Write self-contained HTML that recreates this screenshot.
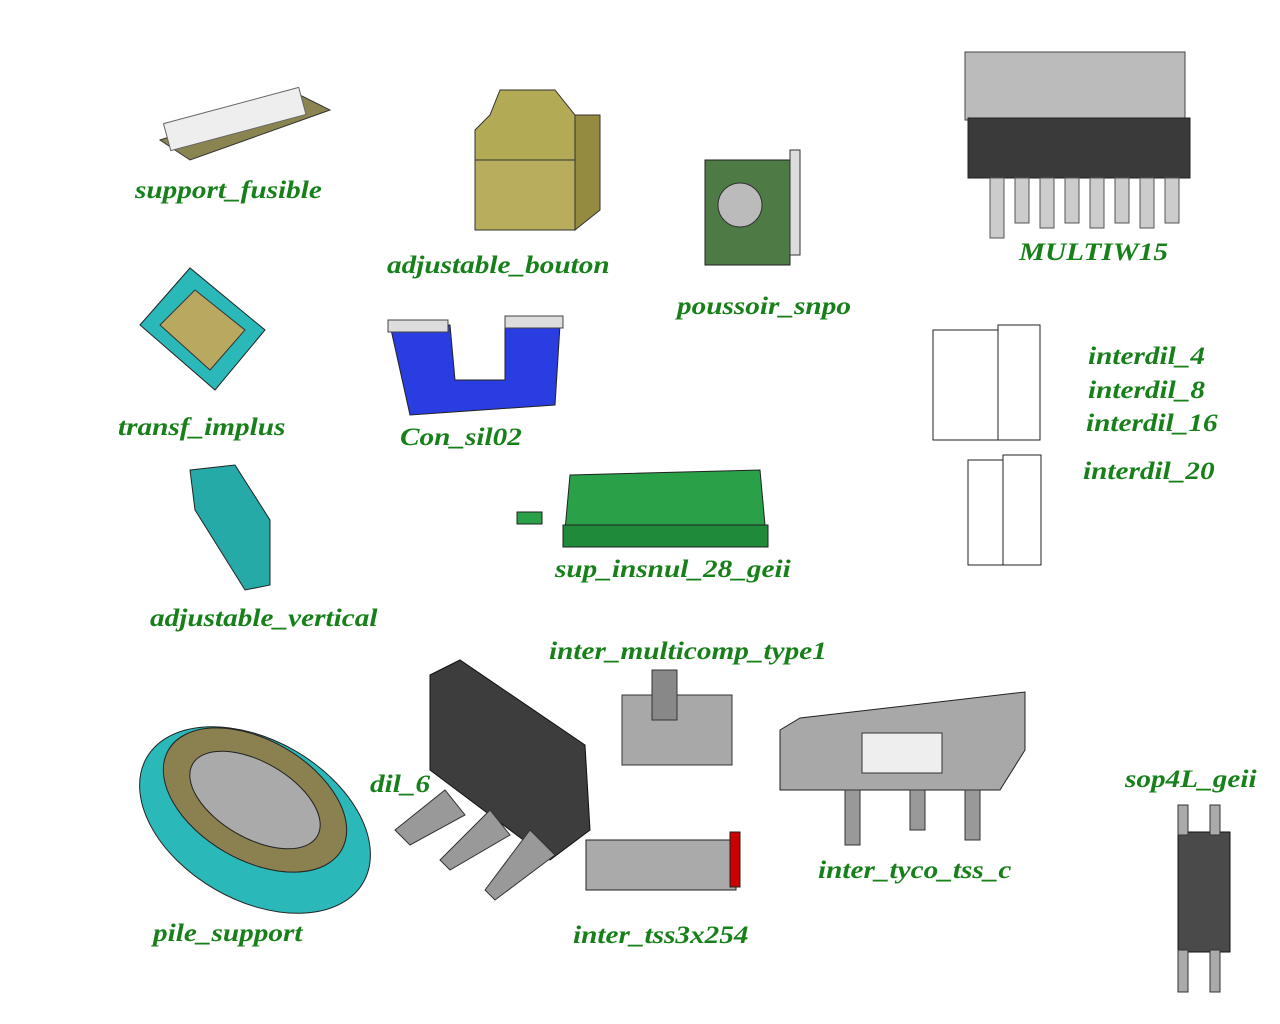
<!DOCTYPE html>
<html><head><meta charset="utf-8"><style>
body{margin:0;background:#fff;width:1280px;height:1024px;overflow:hidden;position:relative}
.l{position:absolute;font-family:"Liberation Serif",serif;font-weight:bold;font-style:italic;font-size:25px;color:#17801a;white-space:nowrap;line-height:1;transform:scaleX(1.17);transform-origin:0 0}
svg{position:absolute;left:0;top:0}
</style></head><body>
<svg width="1280" height="1024" viewBox="0 0 1280 1024">
<polygon points="160,140 300,95 330,110 190,160" fill="#8a8550" stroke="#333"/>
<rect x="165" y="105" width="140" height="28" fill="#eee" stroke="#666" transform="rotate(-15 235 120)"/>
<polygon points="475,160 575,160 595,115 575,115 555,90 500,90 490,115 475,130" fill="#b2aa55" stroke="#333"/>
<rect x="475" y="160" width="100" height="70" fill="#b8ad5c" stroke="#333"/>
<polygon points="575,115 600,115 600,210 575,230" fill="#948a40" stroke="#333"/>
<rect x="705" y="160" width="85" height="105" fill="#4d7a45" stroke="#222"/>
<rect x="790" y="150" width="10" height="105" fill="#ddd" stroke="#333"/>
<circle cx="740" cy="205" r="22" fill="#bbb" stroke="#333"/>
<polygon points="965,52 1185,52 1185,120 965,120" fill="#bbb" stroke="#444"/>
<rect x="968" y="118" width="222" height="60" fill="#3a3a3a" stroke="#222"/>
<g fill="#ccc" stroke="#555"><rect x="990" y="178" width="14" height="60"/><rect x="1015" y="178" width="14" height="45"/><rect x="1040" y="178" width="14" height="50"/><rect x="1065" y="178" width="14" height="45"/><rect x="1090" y="178" width="14" height="50"/><rect x="1115" y="178" width="14" height="45"/><rect x="1140" y="178" width="14" height="50"/><rect x="1165" y="178" width="14" height="45"/></g>
<polygon points="140,325 190,268 265,330 215,390" fill="#2ab8b8" stroke="#222"/>
<polygon points="160,325 195,290 245,330 210,370" fill="#b8a860" stroke="#333"/>
<polygon points="390,325 450,325 455,380 505,380 505,325 560,325 555,405 410,415" fill="#2a3de0" stroke="#222"/>
<rect x="388" y="320" width="60" height="12" fill="#ddd" stroke="#444"/><rect x="505" y="316" width="58" height="12" fill="#ddd" stroke="#444"/>
<rect x="933" y="330" width="65" height="110" fill="#fff" stroke="#222"/>
<rect x="998" y="325" width="42" height="115" fill="#fff" stroke="#222"/>
<rect x="968" y="460" width="35" height="105" fill="#fff" stroke="#222"/>
<rect x="1003" y="455" width="38" height="110" fill="#fff" stroke="#222"/>
<polygon points="570,475 760,470 765,525 565,530" fill="#2aa048" stroke="#222"/>
<rect x="563" y="525" width="205" height="22" fill="#1f8a3a" stroke="#222"/>
<rect x="517" y="512" width="25" height="12" fill="#2aa048" stroke="#222"/>
<polygon points="190,470 235,465 270,520 270,585 245,590 195,510" fill="#25aaa8" stroke="#222"/>
<polygon points="430,675 460,660 585,745 590,830 550,860 430,770" fill="#3d3d3d" stroke="#111"/>
<g fill="#999" stroke="#333"><polygon points="395,830 445,790 465,815 410,845"/><polygon points="440,860 490,810 510,835 450,870"/><polygon points="485,890 530,830 555,855 495,900"/></g>
<rect x="622" y="695" width="110" height="70" fill="#a8a8a8" stroke="#333"/>
<rect x="652" y="670" width="25" height="50" fill="#888" stroke="#333"/>
<polygon points="780,730 800,718 1025,692 1025,750 1000,790 780,790" fill="#a8a8a8" stroke="#222"/>
<rect x="862" y="733" width="80" height="40" fill="#eee" stroke="#333"/>
<g fill="#999" stroke="#333"><rect x="845" y="790" width="15" height="55"/><rect x="910" y="790" width="15" height="40"/><rect x="965" y="790" width="15" height="50"/></g>
<rect x="586" y="840" width="150" height="50" fill="#aaa" stroke="#222"/>
<rect x="730" y="832" width="10" height="55" fill="#c00" stroke="#222"/>
<rect x="1178" y="832" width="52" height="120" fill="#4a4a4a" stroke="#111"/>
<g fill="#aaa" stroke="#333"><rect x="1178" y="805" width="10" height="30"/><rect x="1210" y="805" width="10" height="30"/><rect x="1178" y="950" width="10" height="42"/><rect x="1210" y="950" width="10" height="42"/></g>
<ellipse cx="255" cy="820" rx="125" ry="80" transform="rotate(30 255 820)" fill="#2ab8b8" stroke="#222"/>
<ellipse cx="255" cy="800" rx="100" ry="60" transform="rotate(30 255 800)" fill="#8a8050" stroke="#222"/>
<ellipse cx="255" cy="800" rx="72" ry="38" transform="rotate(30 255 800)" fill="#aaa" stroke="#222"/>
</svg>
<div class="l" style="left:135px;top:178px">support_fusible</div>
<div class="l" style="left:387px;top:253px">adjustable_bouton</div>
<div class="l" style="left:677px;top:294px">poussoir_snpo</div>
<div class="l" style="left:1019px;top:240px">MULTIW15</div>
<div class="l" style="left:118px;top:415px">transf_implus</div>
<div class="l" style="left:400px;top:425px">Con_sil02</div>
<div class="l" style="left:1088px;top:344px">interdil_4</div>
<div class="l" style="left:1088px;top:378px">interdil_8</div>
<div class="l" style="left:1086px;top:411px">interdil_16</div>
<div class="l" style="left:1083px;top:459px">interdil_20</div>
<div class="l" style="left:555px;top:557px">sup_insnul_28_geii</div>
<div class="l" style="left:150px;top:606px">adjustable_vertical</div>
<div class="l" style="left:549px;top:639px">inter_multicomp_type1</div>
<div class="l" style="left:370px;top:772px">dil_6</div>
<div class="l" style="left:1125px;top:767px">sop4L_geii</div>
<div class="l" style="left:818px;top:858px">inter_tyco_tss_c</div>
<div class="l" style="left:153px;top:921px">pile_support</div>
<div class="l" style="left:573px;top:923px">inter_tss3x254</div>
</body></html>
